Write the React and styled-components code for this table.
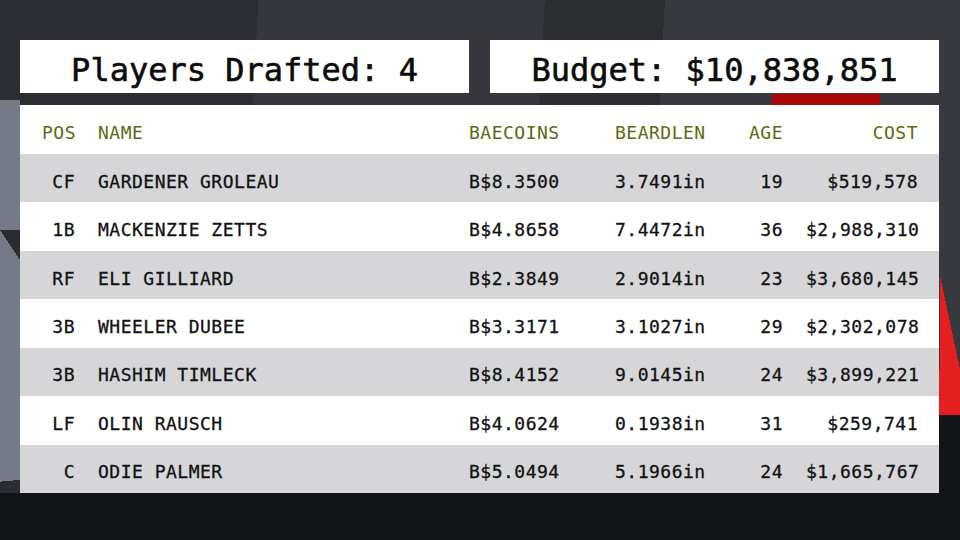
import React from 'react'
import styled, { createGlobalStyle } from 'styled-components'

const GlobalStyle = createGlobalStyle`
  html, body {
    margin: 0;
    padding: 0;
    background: #121418;
  }
  * {
    box-sizing: border-box;
  }
`

// blurred backdrop behind the board, drawn as layered gradients
const Page = styled.div`
  width: 960px;
  height: 540px;
  overflow: hidden;
  padding: 40px 21px 0 20px;
  display: flex;
  flex-direction: column;
  gap: 12px;
  font-family: 'DejaVu Sans Mono', 'Liberation Mono', monospace;
  background:
    linear-gradient(258deg, transparent 0 50%, #e3201f 50% 100%) 940px 275px / 20px 95px no-repeat,
    linear-gradient(#e3201f, #e3201f) 930px 369px / 30px 46px no-repeat,
    linear-gradient(#121418, #121418) 930px 415px / 30px 125px no-repeat,
    linear-gradient(#a80a0c, #a80a0c) 772px 94px / 108px 12px no-repeat,
    linear-gradient(56deg, transparent 0 50%, #2a2c31 50% 100%) 0 230px / 20px 30px no-repeat,
    linear-gradient(175deg, #747a86 0 95%, transparent 95%) 0 100px / 20px 400px no-repeat,
    linear-gradient(#121418, #121418) 0 493px / 960px 47px no-repeat,
    linear-gradient(
      93deg,
      #2b2d32 0 258px,
      #35373c 258px 544px,
      #2b2d31 544px 664px,
      #37393e 664px 100%
    );
`

const TopBar = styled.div`
  display: grid;
  grid-template-columns: 1fr 1fr;
  gap: 21px;
`

const StatBox = styled.div`
  height: 53px;
  padding-top: 6px;
  background: #ffffff;
  display: flex;
  align-items: center;
  justify-content: center;
  font-size: 32px;
  color: #0c0c0c;
  -webkit-text-stroke: 0.6px #0c0c0c;
  white-space: nowrap;
`

const Table = styled.div`
  display: flex;
  flex-direction: column;
  background: #ffffff;
`

const Row = styled.div`
  display: grid;
  grid-template-columns: 33px 348px 123px 105px 40px 112px;
  column-gap: 23px;
  padding: 6px 22px 0;
  align-items: center;
  height: ${(p) => (p.$head ? '49px' : '48.43px')};
  background: ${(p) => (p.$shaded ? '#d6d6d8' : '#ffffff')};
  color: ${(p) => (p.$head ? '#5b6a12' : '#111214')};
  -webkit-text-stroke: ${(p) => (p.$head ? '0' : '0.3px')} currentColor;
  font-size: 18px;
  letter-spacing: 0.5px;
  white-space: nowrap;
`

const Cell = styled.div`
  text-align: ${(p) => (p.$right ? 'right' : 'left')};
`

const players = [
  ['CF', 'GARDENER GROLEAU', 'B$8.3500', '3.7491in', '19', '$519,578'],
  ['1B', 'MACKENZIE ZETTS', 'B$4.8658', '7.4472in', '36', '$2,988,310'],
  ['RF', 'ELI GILLIARD', 'B$2.3849', '2.9014in', '23', '$3,680,145'],
  ['3B', 'WHEELER DUBEE', 'B$3.3171', '3.1027in', '29', '$2,302,078'],
  ['3B', 'HASHIM TIMLECK', 'B$8.4152', '9.0145in', '24', '$3,899,221'],
  ['LF', 'OLIN RAUSCH', 'B$4.0624', '0.1938in', '31', '$259,741'],
  ['C', 'ODIE PALMER', 'B$5.0494', '5.1966in', '24', '$1,665,767'],
]

export default function App() {
  return (
    <Page>
      <GlobalStyle />
      <TopBar>
        <StatBox>Players Drafted: 4</StatBox>
        <StatBox>Budget: $10,838,851</StatBox>
      </TopBar>
      <Table>
        <Row $head>
          <Cell $right>POS</Cell>
          <Cell>NAME</Cell>
          <Cell>BAECOINS</Cell>
          <Cell>BEARDLEN</Cell>
          <Cell $right>AGE</Cell>
          <Cell $right>COST</Cell>
        </Row>
        {players.map((p, i) => (
          <Row key={p[1]} $shaded={i % 2 === 0}>
            <Cell $right>{p[0]}</Cell>
            <Cell>{p[1]}</Cell>
            <Cell>{p[2]}</Cell>
            <Cell>{p[3]}</Cell>
            <Cell $right>{p[4]}</Cell>
            <Cell $right>{p[5]}</Cell>
          </Row>
        ))}
      </Table>
    </Page>
  )
}
